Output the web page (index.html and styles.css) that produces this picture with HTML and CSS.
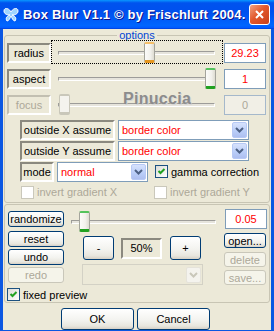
FILE: index.html
```html
<!DOCTYPE html>
<html lang="en">
<head>
    <meta charset="UTF-8">
    <title>Box Blur V1.1</title>
    <link rel="stylesheet" href="styles.css">
</head>
<body>
<div class="window">
    <div class="titlebar">
        <svg class="app-icon" width="16" height="14" viewBox="0 0 16 14">
            <path d="M8 4C6 0 1-1 1 3c0 3 3 4 6 4-3 1-5 3-3 6 2 0 3-3 4-5 1 2 2 5 4 5 2-3 0-5-3-6 3 0 6-1 6-4 0-4-5-3-7 1z" fill="#9fd4ff" stroke="#fff" stroke-width="1"/>
        </svg>
        <span class="title">Box Blur V1.1 © by Frischluft 2004.</span>
        <span class="close">
            <svg width="11" height="11" viewBox="0 0 11 11"><path d="M2 2l7 7M9 2l-7 7" stroke="#fff" stroke-width="2"/></svg>
        </span>
    </div>

    <div class="client">
        <fieldset class="group">
            <legend>options</legend>

            <div class="slider-row">
                <div class="tag">radius</div>
                <div class="slider focused">
                    <div class="track"></div>
                    <div class="thumb hot" style="left:92px"></div>
                </div>
                <div class="value">29.23</div>
            </div>
            <div class="slider-row">
                <div class="tag">aspect</div>
                <div class="slider">
                    <div class="track"></div>
                    <div class="thumb" style="left:153px"></div>
                </div>
                <div class="value">1</div>
            </div>
            <div class="slider-row">
                <div class="tag off">focus</div>
                <div class="slider">
                    <div class="track"></div>
                    <div class="thumb off" style="left:7px"></div>
                </div>
                <div class="value off">0</div>
                <span class="watermark">Pinuccia</span>
            </div>

            <div class="combo-row first">
                <div class="tag wide">outside X assume</div>
                <div class="select long"><span>border color</span><i class="drop"><svg width="9" height="6" viewBox="0 0 9 6"><path d="M1 1l3.5 3.5L8 1" fill="none" stroke="#4d6185" stroke-width="2"/></svg></i></div>
            </div>
            <div class="combo-row">
                <div class="tag wide">outside Y assume</div>
                <div class="select long"><span>border color</span><i class="drop"><svg width="9" height="6" viewBox="0 0 9 6"><path d="M1 1l3.5 3.5L8 1" fill="none" stroke="#4d6185" stroke-width="2"/></svg></i></div>
            </div>
            <div class="combo-row">
                <div class="tag mode">mode</div>
                <div class="select short"><span>normal</span><i class="drop"><svg width="9" height="6" viewBox="0 0 9 6"><path d="M1 1l3.5 3.5L8 1" fill="none" stroke="#4d6185" stroke-width="2"/></svg></i></div>
                <span class="check gamma"><svg width="11" height="11" viewBox="0 0 11 11"><path d="M2.5 5l2 2 4-4" fill="none" stroke="#21a121" stroke-width="2"/></svg></span>
                <span class="check-text">gamma correction</span>
            </div>
            <div class="invert-row">
                <div class="check-item"><span class="check off"></span><span class="check-text off">invert gradient X</span></div>
                <div class="check-item"><span class="check off"></span><span class="check-text off">invert gradient Y</span></div>
            </div>
        </fieldset>

        <div class="panel">
            <div class="panel-top">
                <div class="btn-col left">
                    <div class="btn first">randomize</div>
                    <div class="btn">reset</div>
                    <div class="btn">undo</div>
                    <div class="btn off">redo</div>
                </div>
                <div class="center">
                    <div class="slider wide">
                        <div class="track"></div>
                        <div class="thumb" style="left:14px"></div>
                    </div>
                    <div class="zoom-row">
                        <div class="btn step minus">-</div>
                        <div class="sunken">50%</div>
                        <div class="btn step plus">+</div>
                    </div>
                    <div class="select preset off"><span></span><i class="drop"><svg width="9" height="6" viewBox="0 0 9 6"><path d="M1 1l3.5 3.5L8 1" fill="none" stroke="#c9c7ba" stroke-width="2"/></svg></i></div>
                </div>
                <div class="btn-col right">
                    <div class="value">0.05</div>
                    <div class="btn open">open...</div>
                    <div class="btn off delete">delete</div>
                    <div class="btn off save">save...</div>
                </div>
            </div>
            <div class="check-item preview">
                <span class="check"><svg width="11" height="11" viewBox="0 0 11 11"><path d="M2.5 5l2 2 4-4" fill="none" stroke="#21a121" stroke-width="2"/></svg></span>
                <span class="check-text">fixed preview</span>
            </div>
        </div>

        <div class="actions">
            <div class="btn big ok">OK</div>
            <div class="btn big">Cancel</div>
        </div>
    </div>
</div>
</body>
</html>
```

FILE: styles.css
```css
* {
    box-sizing: border-box;
}

body {
    margin: 0;
    width: 274px;
    height: 331px;
    overflow: hidden;
    font-family: "Liberation Sans", Arial, sans-serif;
    font-size: 11px;
    color: #000;
    background: #0855dd;
}

.window {
    width: 274px;
    height: 333px;
    display: flex;
    flex-direction: column;
    background: #0b57e2;
}

.titlebar {
    height: 29px;
    flex: none;
    display: flex;
    align-items: center;
    padding: 0 4px 0 3px;
    background: linear-gradient(180deg, #0997ff, #0053ee 10%, #0050ee 40%, #0066ff 88%, #005bff 95%, #003dd7);
}

.app-icon {
    flex: none;
    margin-top: 1px;
}

.title {
    margin-left: 4px;
    color: #fff;
    font-weight: bold;
    font-size: 13px;
    letter-spacing: 0.2px;
    text-shadow: 1px 1px #0f1089;
    white-space: nowrap;
}

.close {
    margin-left: auto;
    width: 21px;
    height: 21px;
    border: 1px solid #fff;
    border-radius: 3px;
    background: linear-gradient(135deg, #f0a282, #e2582c 45%, #c8401b);
    display: flex;
    align-items: center;
    justify-content: center;
}

.client {
    flex: 1;
    margin: 0 3px 3px;
    background: #ece9d8;
    display: flex;
    flex-direction: column;
}

/* group boxes */

.group {
    margin: 1px 1px 0;
    padding: 0 2px;
    border: 1px solid #c8c5b4;
    border-radius: 3px;
    min-width: 0;
}

.group legend {
    margin: 0 auto;
    padding: 0 2px;
    line-height: 10px;
    color: #0046d5;
}

.panel {
    margin: 1px 1px 0;
    padding: 4px 3px 1px;
    border: 1px solid #c8c5b4;
    border-radius: 3px;
}

/* rows */

.slider-row {
    position: relative;
    height: 26px;
    display: flex;
    align-items: center;
}

.tag {
    flex: none;
    width: 44px;
    height: 20px;
    border: 2px solid;
    border-color: #8b897f #fff #fff #8b897f;
    display: flex;
    align-items: center;
    justify-content: center;
    white-space: nowrap;
}

.tag.off {
    border-color: #c2bfb1 #fff #fff #c2bfb1;
    color: #aca899;
}

.tag.wide {
    width: 95px;
}

.tag.mode {
    width: 34px;
}

.value {
    flex: none;
    width: 42px;
    height: 20px;
    margin-left: 1px;
    border: 1px solid #7f9db9;
    background: #fff;
    color: #f00;
    display: flex;
    align-items: center;
    justify-content: center;
}

.value.off {
    background: #f1efe6;
    border-color: #a5b8cb;
    color: #aca899;
}

.watermark {
    position: absolute;
    left: 116px;
    top: -2px;
    font-size: 16px;
    font-weight: bold;
    color: #8c8c8c;
    text-shadow: 1px 1px 0 #d6d6d6;
    letter-spacing: 0.3px;
}

/* slider */

.slider {
    position: relative;
    flex: none;
    align-self: flex-start;
    width: 172px;
    height: 24px;
    border: 1px solid transparent;
}

.slider.focused {
    border: 1px dotted #000;
}

.slider.wide {
    width: 160px;
    align-self: auto;
}

.track {
    position: absolute;
    left: 6px;
    right: 7px;
    top: 10px;
    height: 4px;
    border: 1px solid;
    border-color: #9d9c99 #fff #fff #9d9c99;
    background: #e6e4dc;
}

.thumb {
    position: absolute;
    top: 1px;
    width: 11px;
    height: 21px;
    border: 1px solid #a4a49c;
    border-top: 2px solid #53c35c;
    border-bottom: 3px solid #21a121;
    border-radius: 2px;
    background: linear-gradient(90deg, #fbfbf9, #f2f1ec 60%, #dedcd2);
}

.thumb.hot {
    border-top-color: #f7c069;
    border-bottom-color: #e5961e;
}

.thumb.off {
    border-top-color: #c9c7ba;
    border-bottom-color: #c9c7ba;
    border-color: #c9c7ba;
    background: #f4f3ee;
}

/* combos */

.combo-row {
    height: 21px;
    margin-left: 13px;
    display: flex;
    align-items: center;
}

.combo-row.first {
    margin-top: 1px;
}

.select {
    flex: none;
    height: 20px;
    margin-left: 3px;
    padding-left: 3px;
    border: 1px solid #7f9db9;
    background: #fff;
    color: #f00;
    display: flex;
    align-items: center;
}

.select.long {
    width: 131px;
}

.select.short {
    width: 91px;
}

.drop {
    margin-left: auto;
    margin-right: 1px;
    width: 15px;
    height: 16px;
    border: 1px solid #b7c9f5;
    border-radius: 2px;
    background: linear-gradient(180deg, #d7e2fc, #b9cdf8 60%, #aebff0);
    display: flex;
    align-items: center;
    justify-content: center;
}

.select.preset {
    width: 121px;
    height: 21px;
    margin: 4px 0 0 18px;
    border-color: #d3d1c5;
    background: #ece9d8;
}

.select.off .drop {
    border-color: #e5e3da;
    background: #f4f3ee;
}

/* checkboxes */

.check {
    flex: none;
    width: 13px;
    height: 13px;
    border: 1px solid #1c5180;
    background: linear-gradient(135deg, #dcdcd7, #fff);
    display: flex;
    align-items: center;
    justify-content: center;
}

.check.off {
    border-color: #cac8bb;
    background: #fff;
}

.check.gamma {
    margin-left: 7px;
}

.check-text {
    margin-left: 3px;
    white-space: nowrap;
}

.check-text.off {
    color: #aca899;
}

.invert-row {
    height: 20px;
    margin-left: 14px;
    display: grid;
    grid-template-columns: 133px auto;
    align-items: center;
}

.check-item {
    display: flex;
    align-items: center;
}

.preview {
    height: 13px;
    margin: 3px 0 0 -1px;
}

/* lower panel */

.panel-top {
    display: flex;
}

.btn-col {
    flex: none;
    display: flex;
    flex-direction: column;
}

.btn-col.left {
    width: 56px;
    margin-top: 2px;
}

.btn-col.right {
    width: 42px;
}

.center {
    flex: none;
    width: 160px;
    display: flex;
    flex-direction: column;
}

.btn {
    height: 16px;
    border: 1px solid #003c74;
    border-radius: 3px;
    background: linear-gradient(180deg, #fff, #f3f3ef 55%, #e8e6de 85%, #d6d0c5);
    display: flex;
    align-items: center;
    justify-content: center;
    white-space: nowrap;
}

.btn-col.left .btn {
    margin-top: 2px;
}

.btn-col.left .btn.first {
    margin: 0 0 2px;
}

.btn.off {
    border-color: #c9c7ba;
    color: #aca899;
    background: #f5f4ea;
}

.btn.open,
.btn.delete,
.btn.save {
    height: 15px;
    margin-top: 4px;
}

.btn.save {
    margin-top: 3px;
}

.zoom-row {
    height: 24px;
    margin-top: 3px;
    display: flex;
    align-items: center;
}

.btn.step {
    width: 31px;
    height: 24px;
}

.btn.minus {
    margin-left: 19px;
}

.btn.plus {
    margin-left: 8px;
}

.sunken {
    width: 41px;
    height: 21px;
    margin-left: 7px;
    border: 2px solid;
    border-color: #8b897f #fff #fff #8b897f;
    display: flex;
    align-items: center;
    justify-content: center;
}

.actions {
    margin-top: 5px;
    display: flex;
}

.btn.big {
    width: 73px;
    height: 22px;
    margin-left: 3px;
}

.btn.big.ok {
    margin-left: 58px;
}
```
